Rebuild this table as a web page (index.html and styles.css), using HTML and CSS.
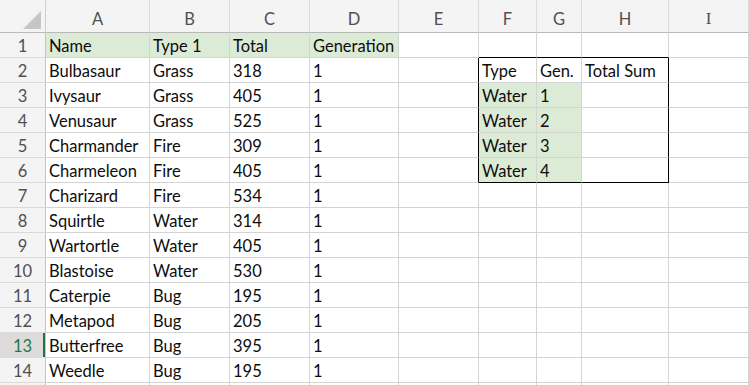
FILE: index.html
```html
<!DOCTYPE html>
<html>
<head>
<meta charset="utf-8">
<link rel="stylesheet" href="styles.css">
</head>
<body>
<div class="sheet">
  <div class="corner"><span class="tri"></span></div>
  <div class="ch">A</div><div class="ch">B</div><div class="ch">C</div><div class="ch">D</div><div class="ch">E</div><div class="ch">F</div><div class="ch">G</div><div class="ch">H</div><div class="ch"><span class="serif">I</span></div><div class="ch last"></div>

  <div class="rh">1</div><div class="c g">Name</div><div class="c g">Type 1</div><div class="c g">Total</div><div class="c g">Generation</div><div class="c"></div><div class="c bb"></div><div class="c bb"></div><div class="c bb"></div><div class="c"></div><div class="c"></div>

  <div class="rh">2</div><div class="c">Bulbasaur</div><div class="c">Grass</div><div class="c">318</div><div class="c">1</div><div class="c br"></div><div class="c">Type</div><div class="c">Gen.</div><div class="c br">Total Sum</div><div class="c"></div><div class="c"></div>

  <div class="rh">3</div><div class="c">Ivysaur</div><div class="c">Grass</div><div class="c">405</div><div class="c">1</div><div class="c br"></div><div class="c gn">Water</div><div class="c gn">1</div><div class="c br"></div><div class="c"></div><div class="c"></div>

  <div class="rh">4</div><div class="c">Venusaur</div><div class="c">Grass</div><div class="c">525</div><div class="c">1</div><div class="c br"></div><div class="c gn">Water</div><div class="c gn">2</div><div class="c br"></div><div class="c"></div><div class="c"></div>

  <div class="rh">5</div><div class="c">Charmander</div><div class="c">Fire</div><div class="c">309</div><div class="c">1</div><div class="c br"></div><div class="c gn">Water</div><div class="c gn">3</div><div class="c br"></div><div class="c"></div><div class="c"></div>

  <div class="rh">6</div><div class="c">Charmeleon</div><div class="c">Fire</div><div class="c">405</div><div class="c">1</div><div class="c br"></div><div class="c gn bb">Water</div><div class="c gn bb">4</div><div class="c br bb"></div><div class="c"></div><div class="c"></div>

  <div class="rh">7</div><div class="c">Charizard</div><div class="c">Fire</div><div class="c">534</div><div class="c">1</div><div class="c"></div><div class="c"></div><div class="c"></div><div class="c"></div><div class="c"></div><div class="c"></div>

  <div class="rh">8</div><div class="c">Squirtle</div><div class="c">Water</div><div class="c">314</div><div class="c">1</div><div class="c"></div><div class="c"></div><div class="c"></div><div class="c"></div><div class="c"></div><div class="c"></div>

  <div class="rh">9</div><div class="c">Wartortle</div><div class="c">Water</div><div class="c">405</div><div class="c">1</div><div class="c"></div><div class="c"></div><div class="c"></div><div class="c"></div><div class="c"></div><div class="c"></div>

  <div class="rh">10</div><div class="c">Blastoise</div><div class="c">Water</div><div class="c">530</div><div class="c">1</div><div class="c"></div><div class="c"></div><div class="c"></div><div class="c"></div><div class="c"></div><div class="c"></div>

  <div class="rh">11</div><div class="c">Caterpie</div><div class="c">Bug</div><div class="c">195</div><div class="c">1</div><div class="c"></div><div class="c"></div><div class="c"></div><div class="c"></div><div class="c"></div><div class="c"></div>

  <div class="rh">12</div><div class="c">Metapod</div><div class="c">Bug</div><div class="c">205</div><div class="c">1</div><div class="c"></div><div class="c"></div><div class="c"></div><div class="c"></div><div class="c"></div><div class="c"></div>

  <div class="rh active">13</div><div class="c">Butterfree</div><div class="c">Bug</div><div class="c">395</div><div class="c">1</div><div class="c"></div><div class="c"></div><div class="c"></div><div class="c"></div><div class="c"></div><div class="c"></div>

  <div class="rh">14</div><div class="c">Weedle</div><div class="c">Bug</div><div class="c">195</div><div class="c">1</div><div class="c"></div><div class="c"></div><div class="c"></div><div class="c"></div><div class="c"></div><div class="c"></div>

  <div class="rh"></div><div class="c"></div><div class="c"></div><div class="c"></div><div class="c"></div><div class="c"></div><div class="c"></div><div class="c"></div><div class="c"></div><div class="c"></div><div class="c"></div>
</div>
</body>
</html>
```

FILE: styles.css
```css
html, body {
  margin: 0;
  padding: 0;
  background: #ffffff;
  overflow: hidden;
}

.sheet {
  display: grid;
  grid-template-columns: 46px 104px 80px 80px 89px 80px 58px 45px 87px 80px 1fr;
  grid-template-rows: 33px;
  grid-auto-rows: 25px;
  width: 749px;
  font-family: Lato, "Liberation Sans", sans-serif;
  font-size: 16.5px;
  color: #0d0d0d;
}

.corner {
  position: relative;
  background: #f4f4f4;
  border-right: 1px solid #d0d0d0;
  border-bottom: 1px solid #b9b9b9;
}

.tri {
  position: absolute;
  right: 4px;
  bottom: 3px;
  width: 0;
  height: 0;
  border-left: 18px solid transparent;
  border-bottom: 18px solid #c6c6c6;
}

.ch {
  background: #f4f4f4;
  border-right: 1px solid #dcdcdc;
  border-bottom: 1px solid #b9b9b9;
  display: flex;
  align-items: center;
  justify-content: center;
  color: #505050;
  font-size: 16.5px;
  padding-top: 6px;
  box-sizing: border-box;
}

.ch.last {
  border-right: none;
}

.serif {
  font-family: "Liberation Serif", serif;
  font-size: 17px;
}

.rh {
  background: #f4f4f4;
  border-right: 1px solid #c4c4c4;
  border-bottom: 1px solid #dadada;
  display: flex;
  align-items: flex-end;
  justify-content: center;
  color: #505050;
  font-size: 16.5px;
  padding-bottom: 1px;
  box-sizing: border-box;
}

.rh.active {
  position: relative;
  background: #dedcda;
  color: #1f7a45;
}

.rh.active::after {
  content: "";
  position: absolute;
  right: 0;
  top: 0;
  bottom: 0;
  width: 2px;
  background: #217346;
}

.c {
  border-right: 1px solid #d4d4d4;
  border-bottom: 1px solid #d4d4d4;
  box-sizing: border-box;
  display: flex;
  align-items: flex-end;
  padding: 0 3px 1px 3px;
  white-space: nowrap;
  overflow: visible;
}

.c.g,
.c.gn {
  background: #dcebd5;
}

.c.br {
  border-right-color: #000000;
}

.c.bb {
  border-bottom-color: #000000;
}
```
